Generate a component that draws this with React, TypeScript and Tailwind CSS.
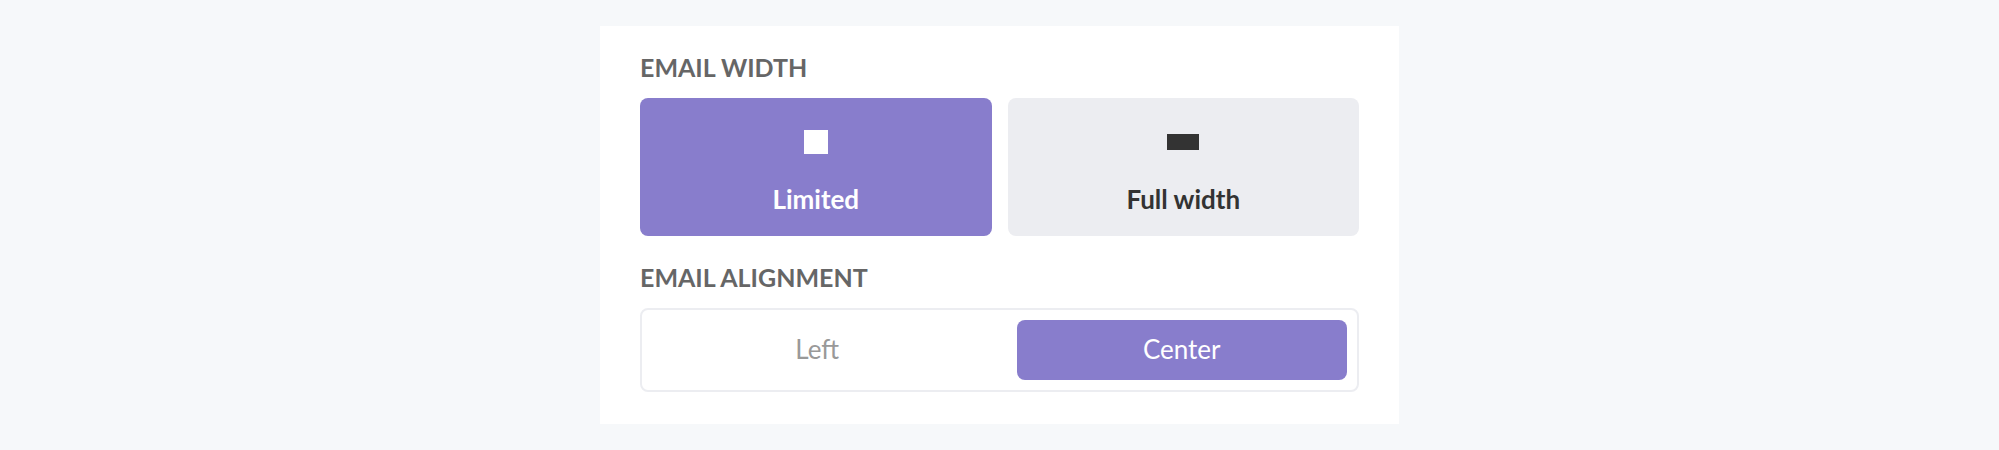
import { useState } from "react";
import clsx from "clsx";

type EmailWidth = "limited" | "full";
type EmailAlignment = "left" | "center";

interface WidthOption {
  value: EmailWidth;
  label: string;
  iconClass: string;
}

const widthOptions: WidthOption[] = [
  { value: "limited", label: "Limited", iconClass: "w-6 h-6" },
  { value: "full", label: "Full width", iconClass: "w-8 h-4" },
];

const alignmentOptions: { value: EmailAlignment; label: string }[] = [
  { value: "left", label: "Left" },
  { value: "center", label: "Center" },
];

const App = () => {
  const [width, setWidth] = useState<EmailWidth>("limited");
  const [alignment, setAlignment] = useState<EmailAlignment>("center");

  return (
    <div className="min-h-screen bg-[#f6f8fa] px-4 py-[26px] font-['Lato','Open_Sans',sans-serif]">
      <main className="mx-auto max-w-[799px] bg-white px-10 pt-6 pb-8">
        <section aria-labelledby="email-width">
          <h2
            id="email-width"
            className="text-[25px] leading-[34px] font-bold text-[#666666]"
          >
            EMAIL WIDTH
          </h2>
          <div className="mt-3.5 grid grid-cols-2 gap-4">
            {widthOptions.map((option) => (
              <button
                key={option.value}
                type="button"
                aria-pressed={width === option.value}
                onClick={() => setWidth(option.value)}
                className={clsx(
                  "flex flex-col items-center gap-7 rounded-lg pt-8 pb-5 text-[26px] leading-[34px] font-bold",
                  width === option.value
                    ? "bg-[#887dcc] text-white"
                    : "bg-[#ecedf1] text-[#333333]"
                )}
              >
                <span className="flex h-6 items-center">
                  <span className={clsx("bg-current", option.iconClass)} />
                </span>
                {option.label}
              </button>
            ))}
          </div>
        </section>

        <section aria-labelledby="email-alignment" className="mt-6">
          <h2
            id="email-alignment"
            className="text-[25px] leading-[34px] font-bold text-[#666666]"
          >
            EMAIL ALIGNMENT
          </h2>
          <div className="mt-3.5 grid grid-cols-2 gap-[34px] rounded-lg border-2 border-[#ecedf1] p-2.5">
            {alignmentOptions.map((option) => (
              <button
                key={option.value}
                type="button"
                aria-pressed={alignment === option.value}
                onClick={() => setAlignment(option.value)}
                className={clsx(
                  "rounded-lg pt-3 pb-3.5 text-[26px] leading-[34px]",
                  alignment === option.value
                    ? "bg-[#887dcc] text-white"
                    : "text-[#999999]"
                )}
              >
                {option.label}
              </button>
            ))}
          </div>
        </section>
      </main>
    </div>
  );
};

export default App;
